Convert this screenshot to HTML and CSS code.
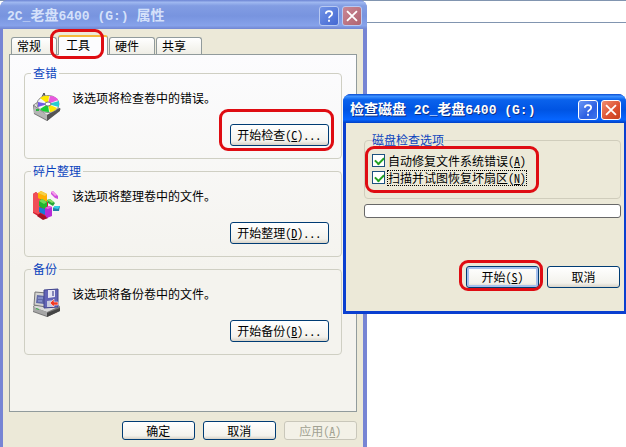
FILE: index.html
```html
<!DOCTYPE html>
<html lang="zh-CN">
<head>
<meta charset="utf-8">
<title>2C_老盘6400 (G:) 属性</title>
<link rel="stylesheet" href="styles.css">
</head>
<body>
<main class="desktop">
  <div class="backdrop"></div>

  <section class="window properties">
    <header class="titlebar inactive">
      <h1 class="title"><span class="latin">2C_</span>老盘<span class="latin">6400 (G:) </span>属性</h1>
      <button class="caption help" type="button" aria-label="帮助"><svg viewBox="0 0 20 20"><path d="M6.5 7.5Q6.5 4.5 10 4.5Q13.5 4.5 13.5 7.3Q13.5 9 11.4 10.2Q10 11 10 12.6M10 14.3V16.3"/></svg></button>
      <button class="caption close" type="button" aria-label="关闭"><svg viewBox="0 0 20 20"><path d="M4.5 4.5L15.5 15.5M15.5 4.5L4.5 15.5"/></svg></button>
    </header>
    <div class="client">
      <nav class="tabs">
        <button class="tab" type="button">常规</button>
        <button class="tab active marked" type="button">工具</button>
        <button class="tab" type="button">硬件</button>
        <button class="tab" type="button">共享</button>
      </nav>
      <div class="panel">
        <fieldset class="group">
          <legend>查错</legend>
          <div class="summary">
            <svg class="icon" viewBox="0 0 32 32">
              <path fill="#777" d="M2 14L12 7L30 18L16 30L3 23Z"/>
              <path fill="#e9e9e9" d="M3 14L13 8L28 17L16 24Z"/>
              <path fill="#b5b5b5" d="M3 15L16 24V29L3 22Z"/>
              <path fill="#555" d="M16 24L29 17V20L16 30Z"/>
              <path fill="#aaa" stroke="#444" d="M10 8L13 2L15 7"/>
              <ellipse cx="17" cy="13" rx="11" ry="8.5" fill="#f6f6f6" stroke="#888"/>
              <path fill="#ffe800" d="M17 13L9 7Q13 4 18 5Z"/>
              <path fill="#e858de" d="M17 13L19 5Q25 5 27 9Z"/>
              <path fill="#29cbd0" d="M17 13L28 10V16Z"/>
              <path fill="#ffe800" d="M17 13L26 17Q23 21 19 21Z"/>
              <path fill="#18cb35" d="M17 13L18 21Q11 21 9 18Z"/>
              <path fill="#7359e6" d="M17 13L7 16V11Z"/>
              <ellipse cx="17" cy="13" rx="3" ry="2" fill="#fff" stroke="#777"/>
              <path fill="#28b640" d="M5 18h3v2H5z"/>
              <path stroke="#555" stroke-width="2" d="M17 26L24 21"/>
            </svg>
            <p>该选项将检查卷中的错误。</p>
          </div>
          <button class="button action marked" type="button">开始检查(<u>C</u>)...</button>
        </fieldset>
        <fieldset class="group">
          <legend>碎片整理</legend>
          <div class="summary">
            <svg class="icon" viewBox="0 0 32 32">
              <path fill="#d61e30" d="M2 5L5 3L9 7L17 13V29L12 30L2 24Z"/>
              <path fill="#f04e58" d="M2 5L5 3L9 6V26L2 23Z"/>
              <path fill="#a61025" d="M9 24L17 29L12 31L6 27Z"/>
              <path fill="#ffb000" d="M7 4L10 2L16 5V12L14 13L7 9Z"/>
              <path fill="#f5d047" d="M7 4L10 2L16 5L14 7Z"/>
              <path fill="#20b530" d="M8 12L11 10L16 13V19L13 20L8 17Z"/>
              <path fill="#71dc58" d="M8 12L11 10L16 13L13 15Z"/>
              <path fill="#167cd7" d="M8 18L14 20V26L8 23Z"/>
              <path fill="#b92bd5" d="M14 19L18 17L21 18V27L16 29L14 26Z"/>
              <path fill="#f05bdd" d="M14 19L18 17L21 18L17 20Z"/>
              <path fill="#ce4cdb" d="M20 3L22 2L27 7V10L24 9L20 5Z"/>
              <path fill="#f49ce9" d="M20 3L22 2L26 6L24 7Z"/>
              <path fill="#22a938" d="M16 11L19 10L24 14L22 17L17 14Z"/>
              <path fill="#84df63" d="M16 11L19 10L23 13L21 14Z"/>
              <path fill="#237fa8" d="M22 19L24 17H29L28 22H22Z"/>
              <path fill="#32cee4" d="M22 19L24 17H29L27 20Z"/>
            </svg>
            <p>该选项将整理卷中的文件。</p>
          </div>
          <button class="button action" type="button">开始整理(<u>D</u>)...</button>
        </fieldset>
        <fieldset class="group">
          <legend>备份</legend>
          <div class="summary">
            <svg class="icon" viewBox="0 0 32 32">
              <path fill="#777" d="M2 19L10 15L29 19V24L16 30L2 25Z"/>
              <path fill="#dadada" d="M2 20L10 16L29 19L16 25Z"/>
              <path fill="#a7a7a7" d="M2 20L16 25V29L2 24Z"/>
              <path fill="#444" d="M16 26L29 21V24L16 30Z"/>
              <path fill="#d3d3d0" stroke="#777" d="M4 5L16 6L15 20L3 18Z"/>
              <path fill="#626ba9" d="M6 8L14 9L13 17L5 16Z"/>
              <path stroke="#a2afe2" d="M7 11h5M7 14h4"/>
              <path fill="#6264b6" stroke="#41448b" d="M13 3L27 2V20L13 21Z"/>
              <path fill="#e6e6f4" d="M17 3L24 3V10L17 11Z"/>
              <path fill="#8587b8" d="M21 4h2v5h-2z"/>
              <path fill="#c6c9df" d="M16 14L23 13V20H16Z"/>
              <path fill="#ef3925" stroke="#fff" stroke-width=".5" d="M19 16L23 12V15H27V18H23V20Z"/>
              <path fill="#39b84a" d="M5 21l3 1v1l-3-1z"/>
            </svg>
            <p>该选项将备份卷中的文件。</p>
          </div>
          <button class="button action" type="button">开始备份(<u>B</u>)...</button>
        </fieldset>
      </div>
      <footer class="actions">
        <button class="button" type="button">确定</button>
        <button class="button" type="button">取消</button>
        <button class="button" type="button" disabled>应用(<u>A</u>)</button>
      </footer>
    </div>
  </section>

  <section class="window dialog">
    <header class="titlebar">
      <h2 class="title">检查磁盘<span class="latin"> 2C_</span>老盘<span class="latin">6400 (G:)</span></h2>
      <button class="caption help" type="button" aria-label="帮助"><svg viewBox="0 0 20 20"><path d="M6.5 7.5Q6.5 4.5 10 4.5Q13.5 4.5 13.5 7.3Q13.5 9 11.4 10.2Q10 11 10 12.6M10 14.3V16.3"/></svg></button>
      <button class="caption close" type="button" aria-label="关闭"><svg viewBox="0 0 20 20"><path d="M4.5 4.5L15.5 15.5M15.5 4.5L4.5 15.5"/></svg></button>
    </header>
    <div class="dialog-body">
      <fieldset class="group options">
        <legend>磁盘检查选项</legend>
        <div class="checks marked">
          <div class="check"><input type="checkbox" id="repair" checked><label for="repair">自动修复文件系统错误(<u>A</u>)</label></div>
          <div class="check"><input type="checkbox" id="scan" checked><label class="focused" for="scan">扫描并试图恢复坏扇区(<u>N</u>)</label></div>
        </div>
      </fieldset>
      <div class="progress" role="progressbar" aria-label="进度"></div>
      <footer class="dialog-actions">
        <button class="button default marked" type="button">开始(<u>S</u>)</button>
        <button class="button" type="button">取消</button>
      </footer>
    </div>
  </section>
</main>
</body>
</html>
```
FILE: styles.css
```css
* { box-sizing: border-box; }
body {
  margin: 0;
  background: #fff;
  color: #000;
  font: 12px/14px "Noto Sans CJK SC", sans-serif;
  font-feature-settings: "hwid";
}
button { font: inherit; font-feature-settings: inherit; color: inherit; padding: 0; }
h1, h2, p { margin: 0; }
u { text-underline-offset: 1px; }

.desktop { position: relative; height: 100vh; overflow: hidden; }
.backdrop { height: 23px; border-bottom: 1px solid #8195b0; border-top: 1px solid #8195b0; }

/* Windows */
.window { position: absolute; display: flex; flex-direction: column; border-radius: 8px 8px 0 0; }
.properties { left: 0; top: 0; width: 58.6%; height: 100%; background: #7785d4; }
.dialog { left: 54.8%; right: 0; top: 94px; background: #0a3fd0; }

.titlebar {
  display: flex;
  align-items: center;
  gap: 3px;
  height: 29px;
  padding: 2px 5px 0 7px;
  border-radius: 8px 8px 0 0;
  color: #fff;
  background: linear-gradient(#0a4bd0, #3e92ff 8%, #0a62ec 20%, #0054e3 55%, #0665ff 88%, #003fc4);
}
.titlebar.inactive {
  color: #d5e1fa;
  background: linear-gradient(#6c84d3, #9fb8f0 8%, #829de3 20%, #7894df 55%, #86a2ea 88%, #7186d2);
}
.title {
  flex: 1;
  font: bold 14px/18px "Noto Sans CJK SC", sans-serif;
  white-space: pre;
}
.titlebar:not(.inactive) .title { text-shadow: 1px 1px #0c2f85; }
.latin { font-family: "Liberation Mono", monospace; font-size: 13px; }
.caption {
  width: 20px;
  height: 20px;
  border: 1px solid #fff;
  border-radius: 3px;
  background: linear-gradient(135deg, #6b96f5, #2c5fe2 60%, #3d76ee);
}
.caption.close { background: linear-gradient(135deg, #f08e70, #dc5030 60%, #c63f1d); }
.inactive .caption { border-color: #b8c9f2; background: linear-gradient(135deg, #7193e6, #4468d2); }
.inactive .caption.close { background: linear-gradient(135deg, #c98795, #b16470); }
.caption svg { display: block; width: 18px; height: 18px; fill: none; stroke: #fff; stroke-width: 2; }

.client {
  flex: 1;
  display: flex;
  flex-direction: column;
  margin: 0 4px 0 3px;
  padding: 0 6px 7px;
  background: #ece9d8;
}

/* Tabs */
.tabs { display: flex; align-items: flex-end; gap: 1px; height: 25px; padding-left: 2px; }
.tab {
  width: 46px;
  height: 17px;
  border: 1px solid #919b9c;
  border-bottom: 0;
  border-radius: 3px 3px 0 0;
  background: linear-gradient(#fff, #efeee6);
  padding-right: 10px;
}
.tab.active {
  position: relative;
  z-index: 1;
  width: 50px;
  height: 20px;
  margin-bottom: -1px;
  border-top: 2px solid #f5b93c;
  background: #fcfcfe;
  padding-bottom: 3px;
}
.panel {
  flex: 1;
  display: flex;
  flex-direction: column;
  gap: 5px;
  padding: 11px 14px;
  border: 1px solid #919b9c;
  background: linear-gradient(#fcfcfe, #f4f3ee 60%);
}

/* Group boxes */
.group {
  min-width: 0;
  height: 93px;
  margin: 0;
  padding: 0 12px 0 6px;
  border: 1px solid #cfcfc3;
  border-radius: 4px;
}
.group legend { padding: 0 2px; color: #0b43bd; }
.summary { display: flex; gap: 9px; padding-top: 11px; height: 44px; }
.icon { width: 32px; height: 32px; }

/* Buttons */
.button {
  position: relative;
  width: 73px;
  height: 19px;
  border: 1px solid #003c74;
  border-radius: 3px;
  background: linear-gradient(#fff, #f3f2ec 80%, #d8d3c8);
  white-space: nowrap;
}
.action { display: block; width: 99px; height: 22px; margin-left: auto; }
.button:disabled { color: #a1a192; border-color: #c9c7ba; background: #f3f1e7; }
.default { box-shadow: inset 0 0 0 2px #a5c0ee; }
.actions { display: flex; justify-content: flex-end; gap: 8px; padding-top: 9px; }

/* Check disk dialog */
.dialog-body {
  margin: 0 2px 3px 3px;
  padding: 10px 3px 23px 18px;
  background: #ece9d8;
}
.group.options { height: 66px; padding: 0 7px; border-color: #d0cdbc; }
.options legend { padding: 0; }
.checks { position: relative; padding-top: 6px; display: grid; gap: 2px; }
.check { display: flex; align-items: center; gap: 3px; height: 15px; }
.check input {
  appearance: none;
  flex: none;
  width: 13px;
  height: 13px;
  margin: 0;
  border: 1px solid #1c5180;
  background: #fff;
}
.check input:checked::before {
  content: "";
  display: block;
  width: 7px;
  height: 4px;
  margin: 2px;
  border: solid #21a121;
  border-width: 0 0 2px 2px;
  transform: rotate(-45deg);
}
.check label { white-space: nowrap; }
.focused { outline: 1px dotted #000; }
.progress { height: 14px; margin-top: 5px; border: 1px solid #686868; border-radius: 3px; background: #fff; }
.dialog-actions { display: flex; justify-content: flex-end; gap: 8px; padding-right: 1px; margin-top: 48px; }
.dialog-actions .button { height: 22px; }

/* Red callouts */
.marked::after {
  content: "";
  position: absolute;
  inset: -8px 3px -4px -9px;
  border: 3px solid #df0c12;
  border-radius: 9px;
  pointer-events: none;
}
.action.marked::after { inset: -16px -6px -6px -12px; }
.checks.marked::after { inset: -1px 74px -8px -7px; }
.default.marked::after { inset: -7px -5px -4px -8px; }
```
